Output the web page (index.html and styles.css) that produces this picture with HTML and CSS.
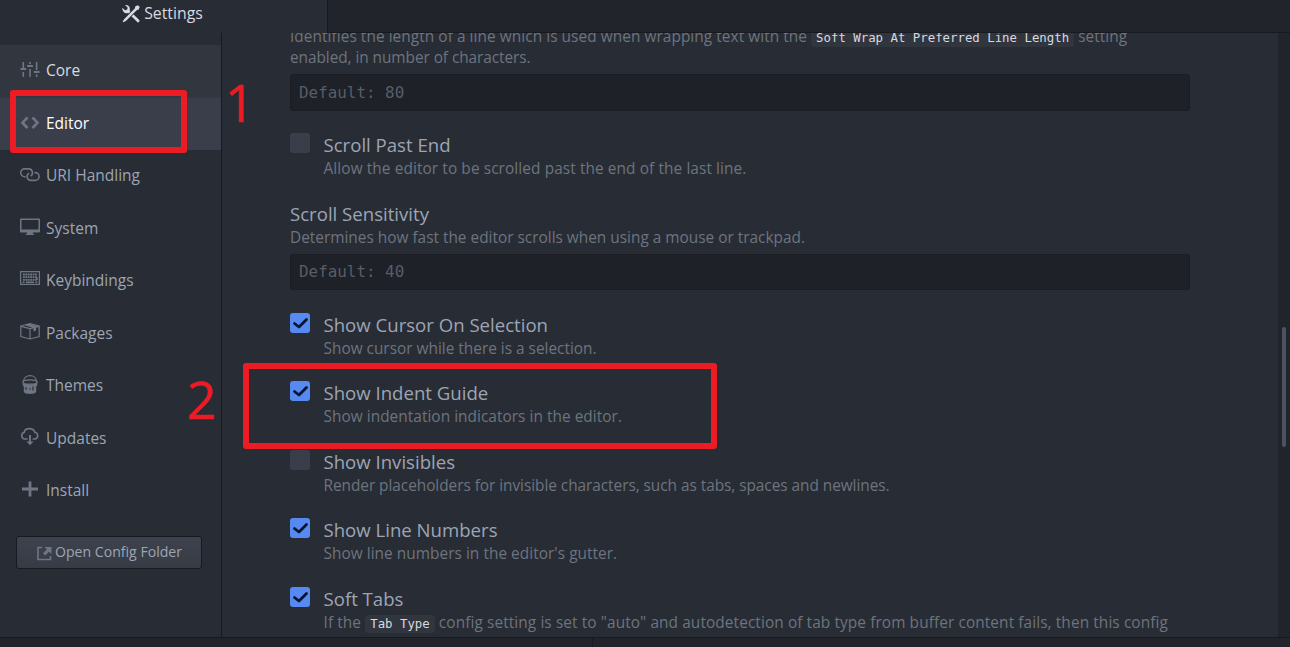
FILE: index.html
```
<!DOCTYPE html>
<html lang="en">
<head>
<meta charset="utf-8">
<title>Settings</title>
<link rel="stylesheet" href="styles.css">
</head>
<body>
<div class="app">
  <header class="tabs">
    <div class="tab">
      <svg class="tab-icon" viewBox="0 0 18 18"><path class="solid" d="M0.3 2.8 3 5.2 5.3 4.6 5.6 2.4 3.2.2C5.5-.3 8 1.400 7.900 4.300L7.700 5.700 17.300 14.900Q18 17.200 15.800 17.500L6 8.100C3.200 9 .2 6.800.3 2.800Z"/><path class="gap" d="M4 14 14 4"/><path class="solid" d="M13.400 1.200 16 .2 17.700 1.900 16.700 4.600 14.700 5.200 3.900 16 1.100 17.300.6 16.800 2.100 14.200 12.800 3.400Z"/></svg>
      <span>Settings</span>
    </div>
    <div class="tab-fill"></div>
  </header>
  <main class="pane">
    <aside class="sidebar">
      <ul class="menu">
        <li class="item hover"><svg class="icon" viewBox="0 0 20 20"><path class="solid" d="M2.500 2h1.600v6H2.500zM.5 8h5.700v2H.5zM2.500 12h1.600v5H2.500zM9.200 2h1.600v2H9.200zM7.200 5h5.700v2H7.200zM9.200 9h1.600v8H9.200zM15.800 2h1.600v8h-1.600zM13.800 11h5.700v2h-5.700zM15.800 14.500h1.600V17h-1.600z"/></svg><span>Core</span></li>
        <li class="item active"><svg class="icon" viewBox="0 0 20 20"><path class="bold" d="M7.500 4.500 2.500 9.700 7.500 15M12.500 4.500 17.500 9.700 12.500 15"/></svg><span>Editor</span></li>
        <li class="item"><svg class="icon" viewBox="0 0 20 20"><path class="line" d="M5.500 11.700H4.600A3.900 3.900 0 0 1 4.600 3.900H9A3.900 3.900 0 0 1 10.600 11.100M14.500 7.600h.7a3.900 3.900 0 0 1 0 7.800h-4.500A3.900 3.900 0 0 1 9.100 8.100"/></svg><span>URI Handling</span></li>
        <li class="item"><svg class="icon" viewBox="0 0 20 20"><path class="solid" fill-rule="evenodd" d="M1 1.500h18q1 0 1 1v12q0 1-1 1H13v1.200l2 1.300H5l2-1.300v-1.200H1q-1 0-1-1v-12q0-1 1-1ZM1.500 3v9.500h17V3Z"/></svg><span>System</span></li>
        <li class="item"><svg class="icon" viewBox="0 0 20 20"><path class="line thin" d="M.6 1.600h18.800v12.800H.6z"/><path class="keys" d="M3 4.500h14M3 7.200h14M3 9.900h14"/><path class="line" d="M2.500 12.200h2M6 12.200h8M15.500 12.200h2M16.800 7v3"/></svg><span>Keybindings</span></li>
        <li class="item"><svg class="icon" viewBox="0 0 20 20"><path class="line thin" d="M.8 4 10 1.500 19.200 4v10.500L10 17 .8 14.500ZM.8 4.300 10 6.700 19.200 4.300M10 6.700V17M5.200 2.900l9.200 2.500M7.500 2.200l9 2.400"/><path class="solid" d="m13.500 5.500 2.600-.6v3.600l-2.600.9z"/></svg><span>Packages</span></li>
        <li class="item"><svg class="icon" viewBox="0 0 20 20"><path class="line thin" d="M3.500 6.700C3.500-1.400 16.500-1.400 16.500 6.700"/><ellipse class="line thin" cx="10" cy="7" rx="7.200" ry="2.200"/><path class="solid" d="M2.800 7.500c2 2.600 12.400 2.600 14.400 0v3.200l-1 .5v5.800c-1 2.600-11.400 2.600-12.400 0v-5.800l-1-.5Z"/><path class="drip" d="M6 12.300v2.400M9.900 13.200v1.600M13 11.500v4"/></svg><span>Themes</span></li>
        <li class="item"><svg class="icon" viewBox="0 0 20 20"><path class="line" d="M7.500 12H4.500A3.500 3.500 0 0 1 4.300 5.200C4.700 2.200 7 1.600 9.400 1.600c2.800 0 4.700 1.400 5.400 3.600a3.500 3.500 0 0 1 .4 6.800h-2.700"/><path class="solid" d="M9 8h2v6.500h2.600L10 18.300l-3.600-3.800H9z"/></svg><span>Updates</span></li>
        <li class="item"><svg class="icon" viewBox="0 0 20 20"><path class="solid" d="M8.600 1.500h2.800v6.100H18v2.800h-6.600v6.100H8.600v-6.100H2V7.600h6.600z"/></svg><span>Install</span></li>
      </ul>
      <button class="config" type="button"><svg class="config-icon" viewBox="0 0 15 15"><path class="line" d="M5 1.500H1v12h12.500V10"/><path class="solid" d="M7.500 1h7v7L12 5.800 8.200 9.500 6 7.300 9.900 3.500z"/></svg><span>Open Config Folder</span></button>
    </aside>
    <section class="content">
      <p class="desc first">Identifies the length of a line which is used when wrapping text with the <code>Soft Wrap At Preferred Line Length</code> setting<br><span class="snug">enabled, in number of characters.</span></p>
      <input class="field" type="text" placeholder="Default: 80">
      <div class="option"><i class="box"></i><div><h3>Scroll Past End</h3><p class="desc wide">Allow the editor to be scrolled past the end of the last line.</p></div></div>
      <div class="setting"><h3>Scroll Sensitivity</h3><p class="desc">Determines how fast the editor scrolls when using a mouse or trackpad.</p><input class="field" type="text" placeholder="Default: 40"></div>
      <div class="option"><i class="box on"><svg viewBox="0 0 20 20"><path d="M4.500 10.500 9 14 16.500 6.500"/></svg></i><div><h3>Show Cursor On Selection</h3><p class="desc">Show cursor while there is a selection.</p></div></div>
      <div class="option"><i class="box on"><svg viewBox="0 0 20 20"><path d="M4.500 10.500 9 14 16.500 6.500"/></svg></i><div><h3>Show Indent Guide</h3><p class="desc even">Show indentation indicators in the editor.</p></div></div>
      <div class="option"><i class="box"></i><div><h3>Show Invisibles</h3><p class="desc render">Render placeholders for invisible characters, such as tabs, spaces and newlines.</p></div></div>
      <div class="option"><i class="box on"><svg viewBox="0 0 20 20"><path d="M4.500 10.500 9 14 16.500 6.500"/></svg></i><div><h3>Show Line Numbers</h3><p class="desc even">Show line numbers in the editor's gutter.</p></div></div>
      <div class="option"><i class="box on"><svg viewBox="0 0 20 20"><path d="M4.500 10.500 9 14 16.500 6.500"/></svg></i><div><h3>Soft Tabs</h3><p class="desc wide">If the <code>Tab Type</code> config setting is set to "auto" and autodetection of tab type from buffer content fails, then this config</p></div></div>
    </section>
    <div class="scroll"><div class="thumb"></div></div>
  </main>
  <footer class="status"><div class="status-left"></div></footer>
  <div class="mark mark-editor"></div>
  <div class="mark mark-indent"></div>
  <span class="step step-one">1</span>
  <span class="step step-two">2</span>
</div>
</body>
</html>
```

FILE: styles.css
```
* { box-sizing: border-box; }
body { margin: 0; background: #282c34; font-family: "Open Sans", "Noto Sans", sans-serif; color: #9da5b4; }
h3, p, ul { margin: 0; padding: 0; font-weight: 400; }
.app { position: relative; width: 1290px; height: 647px; overflow: hidden; display: grid; grid-template-rows: 33px 604px 10px; }

.tabs { display: flex; }
.tab { width: 327px; display: flex; justify-content: center; align-items: flex-start; gap: 4px; padding: 3px 2px 0 0; font-size: 15.8px; line-height: 21px; color: #d7dae0; }
.tab-icon { width: 18px; height: 18px; margin-top: 2px; }
.tab-icon .solid { fill: #d7dae0; }
.gap { fill: none; stroke: #282c34; stroke-width: 4; }
.tab-fill { flex: 1; background: #21252b; border-left: 1px solid #181a1f; border-bottom: 1px solid #181a1f; }

.pane { display: flex; overflow: hidden; }
.sidebar { width: 222px; border-right: 1px solid #181a1f; padding-top: 12px; }
.menu { list-style: none; }
.item { display: flex; align-items: center; height: 52.5px; padding: 0 0 1px 20px; gap: 6px; font-size: 15.5px; line-height: 21px; }
.item.hover { background: #32363e; color: #d7dae0; }
.item.active { background: #3a3e4a; color: #fff; padding-bottom: 0; }
.icon { width: 20px; height: 20px; margin-top: -2px; overflow: visible; }
.solid { fill: #6f7683; }
.line { fill: none; stroke: #6f7683; stroke-width: 1.6; }
.thin { stroke-width: 1.2; }
.bold { fill: none; stroke: #6f7683; stroke-width: 2.6; }
.keys { fill: none; stroke: #6f7683; stroke-width: 1.8; stroke-dasharray: 1.8 .6; }
.drip { stroke: #282c34; stroke-width: 1.2; }
.config { display: flex; width: 186px; height: 33px; margin: 18.500px 0 0 16px; padding: 0 0 2px 20px; align-items: center; gap: 3px; border: 1px solid #181a1f; border-radius: 3px; background: linear-gradient(#3e424e, #363b45); font-family: inherit; font-size: 14.1px; color: #9da5b4; }
.config-icon { width: 15px; height: 15px; margin-top: 4px; flex: none; }

.content { width: 1056px; padding-left: 68px; overflow: hidden; }
.desc { height: 21px; font-size: 15.4px; line-height: 21px; color: #6d747f; white-space: nowrap; }
.wide { letter-spacing: .095px; }
.even { letter-spacing: .04px; }
.render { letter-spacing: -.045px; }
.snug { letter-spacing: -.06px; }
.first { height: 42px; margin-top: -7px; margin-bottom: 6px; letter-spacing: .06px; }
code { font-family: "DejaVu Sans Mono", monospace; font-size: 12.36px; line-height: 1; letter-spacing: 0; color: #d7dae0; background: #31353d; border-radius: 3px; padding: 2px 5px; }
.field { display: block; width: 900px; height: 36.5px; padding: 0 8px; border: 1px solid #1b1d23; border-radius: 3px; background: #1e2127; font-family: "DejaVu Sans Mono", monospace; font-size: 15.9px; letter-spacing: 0; }
.field::placeholder { color: #585d67; opacity: 1; }
h3 { font-size: 18.6px; line-height: 26px; color: #9da5b4; white-space: nowrap; }
.option, .setting { margin-top: 21.5px; }
.option { display: flex; gap: 13.500px; }
.setting .field { margin-top: 6px; }
.box { width: 20px; height: 20px; margin-top: 1px; border-radius: 3px; background: #3a3e4a; flex: none; }
.box.on { background: #568af2; }
.box svg { display: block; }
.box path { fill: none; stroke: #07142e; stroke-width: 2.8; stroke-linecap: round; stroke-linejoin: round; }

.scroll { width: 12px; background: #21252b; padding: 294px 0 0 4px; }
.thumb { width: 4px; height: 120px; border-radius: 2px; background: #4b5362; }
.status { background: #21252b; border-top: 1px solid #181a1f; }
.status-left { width: 593px; height: 9px; border-right: 1px solid #181a1f; }

.mark { position: absolute; border: 6px solid #ed1c24; border-radius: 3px; }
.mark-editor { left: 10px; top: 90px; width: 177px; height: 63px; }
.mark-indent { left: 243px; top: 363px; width: 474px; height: 86px; }
.step { position: absolute; font-size: 52px; line-height: 60px; color: #ed1c24; -webkit-text-stroke: .6px #ed1c24; }
.step-one { left: 225px; top: 72px; }
.step-two { left: 187px; top: 369px; }
```
